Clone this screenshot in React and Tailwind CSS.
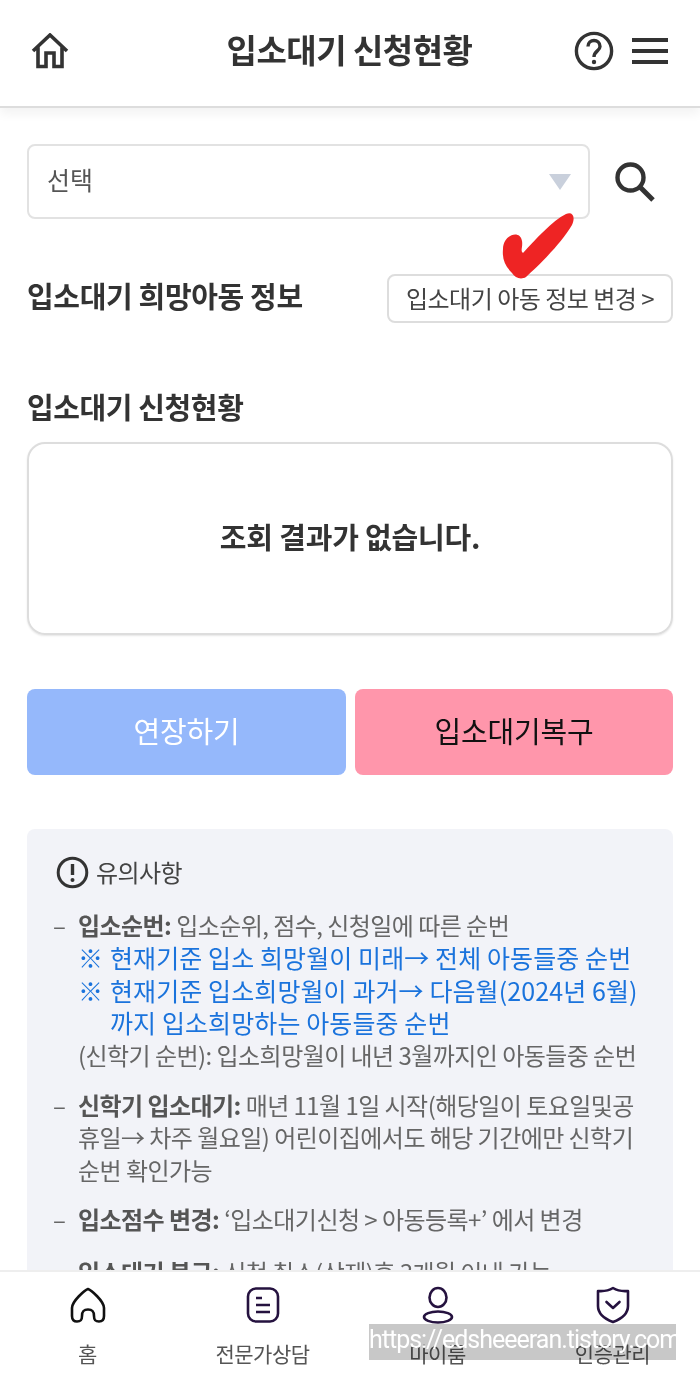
import React from "react";

function Row({ children, className = "" }) {
  return (
    <div className={"flex " + className}>
      <span className="w-[51px] shrink-0 pl-[26px] text-[#666]">–</span>
      <div className="flex-1">{children}</div>
    </div>
  );
}

function Nav({ label, icon }) {
  return (
    <div className="flex flex-col items-center">
      <div className="h-[42px] flex items-center justify-center">{icon}</div>
      <span className="mt-[14px] text-[21px] leading-[26px] tracking-[-0.5px] text-[#555]">{label}</span>
    </div>
  );
}

function Blue({ children }) {
  return (
    <div className="flex text-[#1a73dc] text-[25px] tracking-[0.1px]">
      <span className="w-[32px] shrink-0">※</span>
      <span className="whitespace-nowrap">{children}</span>
    </div>
  );
}

export default function App() {
  return (
    <div className="relative w-[700px] h-[1383px] overflow-hidden bg-white flex flex-col font-['Noto_Sans_CJK_KR','Noto_Sans',sans-serif] text-[#333]">
      <header className="h-[108px] shrink-0 flex items-center justify-between pl-[31px] pr-[32px] pb-[5px] border-b-2 border-[#ddd] shadow-[0_6px_10px_rgba(0,0,0,0.05)] z-10 bg-white">
        <svg width="38" height="36" viewBox="0 0 38 36" fill="none" stroke="#333" strokeWidth="3.6">
          <path d="M2 18 L19 2 L36 18 M7 14 V33.5 H15 V20 H23 V33.5 H31 V14" />
        </svg>
        <h1 className="text-[33px] font-bold leading-none tracking-[-0.5px] ml-[56px] mb-[3px]">입소대기 신청현황</h1>
        <div className="flex items-center gap-[18px]">
          <svg width="40" height="40" viewBox="0 0 40 40" fill="none" stroke="#333">
            <circle cx="20" cy="20" r="17.6" strokeWidth="3.4" />
            <path d="M14 15.5 C14 7.5 26 7.5 26 15.5 C26 20 20 20 20 26" strokeWidth="3.4" />
            <circle cx="20" cy="31" r="2.2" fill="#333" stroke="none" />
          </svg>
          <div className="w-[36px] flex flex-col gap-[7px]">
            <div className="h-[4px] bg-[#333]" />
            <div className="h-[4px] bg-[#333]" />
            <div className="h-[4px] bg-[#333]" />
          </div>
        </div>
      </header>

      <main className="flex-1 min-h-0 overflow-hidden px-[27px] pt-[36px]">
        <div className="flex items-center">
          <div className="w-[563px] h-[75px] rounded-[8px] border-2 border-[#e2e2e2] flex items-center justify-between pl-[18px] pr-[16px]">
            <span className="text-[25px] leading-none text-[#555] mb-[4px]">선택</span>
            <svg width="24" height="18" viewBox="0 0 24 18"><path d="M1 1 H23 L12 17 Z" fill="#c9d0dc" /></svg>
          </div>
          <svg className="ml-[24px]" width="42" height="42" viewBox="0 0 42 42" fill="none" stroke="#333">
            <circle cx="16.5" cy="16.5" r="13" strokeWidth="4.4" />
            <path d="M26 26 L39 39" strokeWidth="5" />
          </svg>
        </div>

        <div className="relative mt-[55px] flex items-center justify-between">
          <h2 className="text-[29px] font-bold leading-none tracking-[-0.35px] mb-[6px]">입소대기 희망아동 정보</h2>
          <div className="w-[286px] h-[49px] rounded-[8px] border-2 border-[#ddd] flex items-center justify-center text-[24px] tracking-[-0.5px] text-[#444] bg-white pb-[2px]">입소대기 아동 정보 변경 &gt;</div>
          <svg className="absolute left-[473px] top-[-63px]" width="76" height="72" viewBox="0 0 76 72">
            <path d="M3 38 C3 24 20 18 22 30 C23 36 20 40 23 42 C36 28 52 10 66 3 C72 0 76 5 72 14 C60 34 38 55 26 66 C21 69 15 67 12 62 C5 55 2 48 3 38 Z" fill="#ee2424" />
          </svg>
        </div>

        <h2 className="mt-[69px] text-[29px] font-bold leading-none tracking-[-0.4px]">입소대기 신청현황</h2>

        <div className="mt-[21px] h-[193px] rounded-[18px] border-2 border-[#ddd] shadow-[0_1px_2px_rgba(0,0,0,0.1)] flex items-center justify-center text-[29px] font-bold tracking-[-0.2px] pb-[4px]">조회 결과가 없습니다.</div>

        <div className="mt-[54px] flex gap-[9px]">
          <div className="w-[319px] h-[86px] rounded-[8px] bg-[#95b8fb] text-white text-[29px] tracking-[-0.2px] flex items-center justify-center pb-[2px]">연장하기</div>
          <div className="w-[318px] h-[86px] rounded-[8px] bg-[#ff96ab] text-[#111] text-[29px] tracking-[-0.2px] flex items-center justify-center pb-[2px]">입소대기복구</div>
        </div>

        <section className="mt-[54px] rounded-t-[8px] bg-[#f2f3f8] pt-[27px] pr-[24px] text-[24px] leading-[32.4px] tracking-[-0.55px] text-[#666] h-[460px]">
          <div className="flex items-center pl-[29px] text-[#444]">
            <svg width="33" height="33" viewBox="0 0 33 33" fill="none">
              <circle cx="16.5" cy="16.5" r="14.3" stroke="#333" strokeWidth="3" />
              <path d="M16.5 8 V19" stroke="#333" strokeWidth="3.4" />
              <circle cx="16.5" cy="24" r="2" fill="#333" />
            </svg>
            <span className="ml-[7px]">유의사항</span>
          </div>

          <Row className="mt-[20px]">
            <div><b className="text-[#555]">입소순번:</b> 입소순위, 점수, 신청일에 따른 순번</div>
            <Blue>현재기준 입소 희망월이 미래→ 전체 아동들중 순번</Blue>
            <Blue>현재기준 입소희망월이 과거→ 다음월(2024년 6월)<br />까지 입소희망하는 아동들중 순번</Blue>
            <div>(신학기 순번): 입소희망월이 내년 3월까지인 아동들중 순번</div>
          </Row>

          <Row className="mt-[18px]">
            <div><b className="text-[#555]">신학기 입소대기:</b> 매년 11월 1일 시작(해당일이 토요일및공<br />휴일→ 차주 월요일) 어린이집에서도 해당 기간에만 신학기<br />순번 확인가능</div>
          </Row>

          <Row className="mt-[17px]">
            <div><b className="text-[#555]">입소점수 변경:</b> ‘입소대기신청 &gt; 아동등록+’ 에서 변경</div>
          </Row>

          <Row className="mt-[20px]">
            <div><b className="text-[#555]">입소대기 복구:</b> 신청 취소(삭제)후 3개월 이내 가능</div>
          </Row>
        </section>
      </main>

      <nav className="relative h-[113px] shrink-0 bg-white border-t-2 border-[#eee] grid grid-cols-4 pt-[12px] z-10">
        <Nav label="홈" icon={
          <svg width="36" height="36" viewBox="0 0 36 36" fill="none" stroke="#111" strokeWidth="2.6" strokeLinejoin="round">
            <path d="M18 2 C21 3 34 14 34 21 V29 C34 33 32 34.5 29 34.5 C25 34.5 24 33 24 29 C24 24 22 22.5 18 22.5 C14 22.5 12 24 12 29 C12 33 11 34.5 7 34.5 C4 34.5 2 33 2 29 V21 C2 14 15 3 18 2 Z" />
          </svg>
        } />
        <Nav label="전문가상담" icon={
          <svg width="36" height="36" viewBox="0 0 36 36" fill="none" stroke="#25123f" strokeWidth="2.6">
            <rect x="3" y="1.5" width="30" height="33" rx="8" />
            <path d="M11 11 H17 M11 18 H25 M11 25 H25" />
          </svg>
        } />
        <Nav label="마이룸" icon={
          <svg width="36" height="38" viewBox="0 0 36 38" fill="none" stroke="#25123f" strokeWidth="2.6">
            <ellipse cx="18" cy="11.5" rx="8.5" ry="9.5" />
            <ellipse cx="18" cy="31" rx="14" ry="5.5" />
          </svg>
        } />
        <Nav label="인증관리" icon={
          <svg width="36" height="38" viewBox="0 0 36 38" fill="none" stroke="#25123f" strokeWidth="2.6" strokeLinejoin="round">
            <path d="M18 2 C22 4.5 27 5.5 33 5 V20 C33 28 26 33 18 36 C10 33 3 28 3 20 V5 C9 5.5 14 4.5 18 2 Z" />
            <path d="M11.5 16 L18 22 L24.5 16" strokeLinecap="round" />
          </svg>
        } />
      </nav>

      <div className="absolute left-[369px] top-[1324px] z-20 w-[307px] h-[36px] bg-[#c8c8c8] mix-blend-multiply" />
      <div className="absolute left-[369px] top-[1324px] z-20 w-[307px] h-[36px] text-white text-[25px] tracking-[-1px] leading-[31px] whitespace-nowrap font-['Roboto',sans-serif] text-center overflow-hidden">https://edsheeeran.tistory.com</div>
    </div>
  );
}
